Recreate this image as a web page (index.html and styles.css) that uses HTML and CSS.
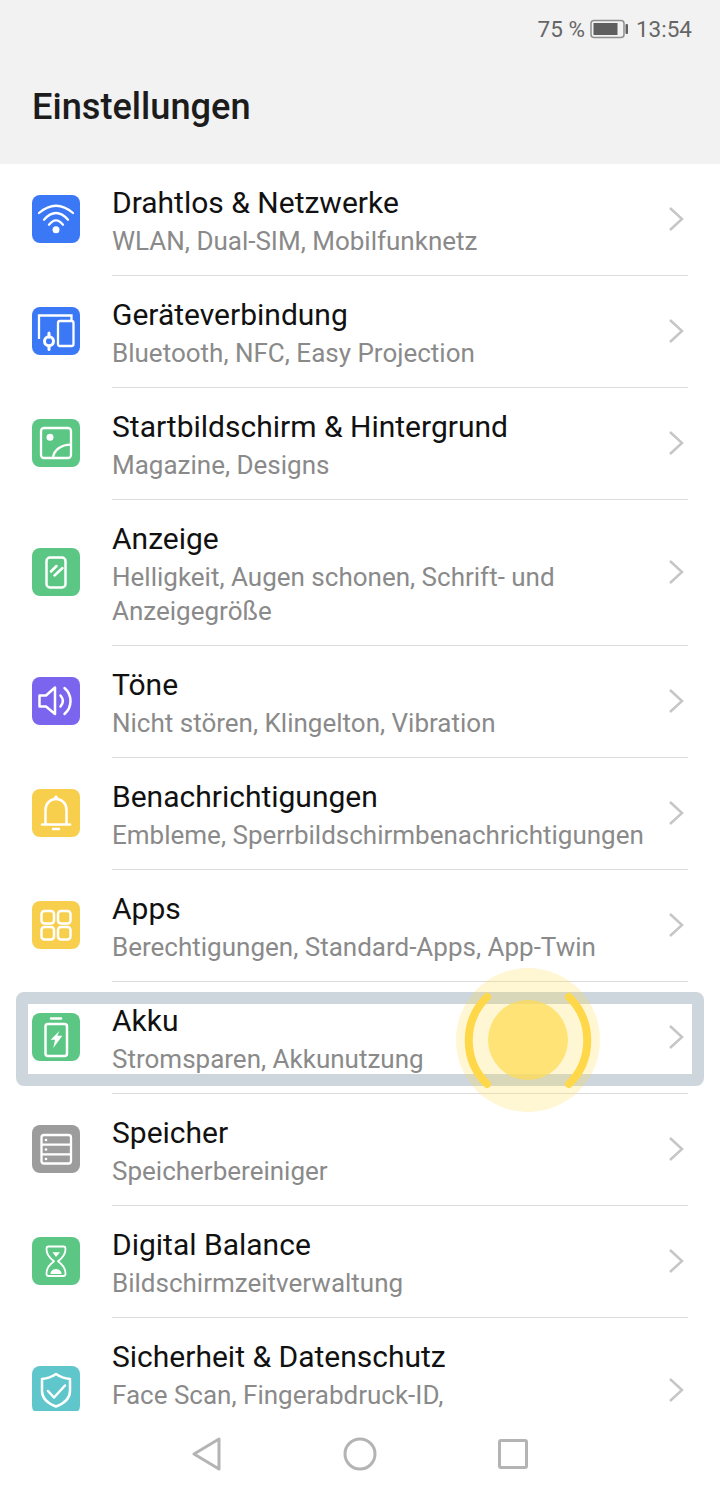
FILE: index.html
```html
<!DOCTYPE html>
<html lang="de">
<head>
<meta charset="utf-8">
<title>Einstellungen</title>
<link rel="stylesheet" href="styles.css">
</head>
<body>
<div class="screen">
  <header class="top">
    <div class="status">
      <span>75 %</span>
      <svg class="batt" width="40" height="20" viewBox="0 0 40 20"><rect x="1" y="1.500" width="33" height="17" rx="3" fill="none" stroke="#8e8e8e" stroke-width="1.500"/><rect x="3.500" y="4" width="24" height="12" fill="#5f5f5f"/><rect x="35.500" y="5" width="2.500" height="10" rx="1" fill="#5f5f5f"/></svg>
      <span>13:54</span>
    </div>
    <h1 class="title">Einstellungen</h1>
  </header>
  <main class="list">
    <a class="row">
      <span class="icon blue"><svg width="48" height="48" viewBox="0 0 48 48" fill="none" stroke="#fff" stroke-width="2.300" stroke-linecap="round"><path d="M7 18Q24 3.400 41 18"/><path d="M12 24.700Q24 11.300 36 24.700"/><path d="M17 29.700Q24 21 31 29.700"/><circle cx="24" cy="34.700" r="3.500" fill="#fff" stroke="none"/></svg></span>
      <span class="text"><span class="name">Drahtlos &amp; Netzwerke</span><span class="sub">WLAN, Dual-SIM, Mobilfunknetz</span></span>
      <svg class="chev" width="16" height="26" viewBox="0 0 16 26"><path d="M2 2l12 11L2 24" fill="none" stroke="#c6c6c6" stroke-width="2.500"/></svg>
    </a>
    <a class="row">
      <span class="icon blue"><svg width="48" height="48" viewBox="0 0 48 48" fill="none" stroke="#fff" stroke-width="2.300"><path d="M7 32V8.500h32.500v5"/><rect x="26" y="14" width="15.500" height="25" rx="2"/><circle cx="17" cy="34.300" r="4.500" stroke-width="3"/><path d="M17 26v4M17 39v3.500" stroke-width="3" stroke-linecap="round"/></svg></span>
      <span class="text"><span class="name">Geräteverbindung</span><span class="sub">Bluetooth, NFC, Easy Projection</span></span>
      <svg class="chev" width="16" height="26" viewBox="0 0 16 26"><path d="M2 2l12 11L2 24" fill="none" stroke="#c6c6c6" stroke-width="2.500"/></svg>
    </a>
    <a class="row">
      <span class="icon green"><svg width="48" height="48" viewBox="0 0 48 48" fill="none" stroke="#fff" stroke-width="2.300"><rect x="9" y="9" width="30" height="30" rx="3"/><circle cx="18" cy="18.300" r="3.500" fill="#fff" stroke="none"/><path d="M21 38.500C22 31 29 25.700 39 25.700"/></svg></span>
      <span class="text"><span class="name">Startbildschirm &amp; Hintergrund</span><span class="sub">Magazine, Designs</span></span>
      <svg class="chev" width="16" height="26" viewBox="0 0 16 26"><path d="M2 2l12 11L2 24" fill="none" stroke="#c6c6c6" stroke-width="2.500"/></svg>
    </a>
    <a class="row">
      <span class="icon green"><svg width="48" height="48" viewBox="0 0 48 48" fill="none" stroke="#fff" stroke-width="2.500"><rect x="14.500" y="9.500" width="19" height="30" rx="3.500"/><path d="M19 23.500l5.500-5.500M22.500 27.500l8-7.500" stroke-linecap="round"/></svg></span>
      <span class="text"><span class="name">Anzeige</span><span class="sub">Helligkeit, Augen schonen, Schrift- und Anzeigegröße</span></span>
      <svg class="chev" width="16" height="26" viewBox="0 0 16 26"><path d="M2 2l12 11L2 24" fill="none" stroke="#c6c6c6" stroke-width="2.500"/></svg>
    </a>
    <a class="row">
      <span class="icon violet"><svg width="48" height="48" viewBox="0 0 48 48" fill="none" stroke="#fff" stroke-width="2.500" stroke-linecap="round" stroke-linejoin="round"><path d="M7.500 18.500v11h6.500l9 7.500V10.500l-9 8z"/><path d="M28.500 18.500c3 3.500 3 7.500 0 11"/><path d="M32.500 11c8 7 8 19 0 26"/></svg></span>
      <span class="text"><span class="name">Töne</span><span class="sub">Nicht stören, Klingelton, Vibration</span></span>
      <svg class="chev" width="16" height="26" viewBox="0 0 16 26"><path d="M2 2l12 11L2 24" fill="none" stroke="#c6c6c6" stroke-width="2.500"/></svg>
    </a>
    <a class="row">
      <span class="icon yellow"><svg width="48" height="48" viewBox="0 0 48 48" fill="none" stroke="#fff" stroke-width="2.500" stroke-linecap="round" stroke-linejoin="round"><path d="M10 35.500h28"/><path d="M13.500 35V21c0-6.500 4.500-11 10.500-11s10.500 4.500 10.500 11v14"/><path d="M21 40h6"/><circle cx="24" cy="8.500" r="2" fill="#fff" stroke="none"/></svg></span>
      <span class="text"><span class="name">Benachrichtigungen</span><span class="sub">Embleme, Sperrbildschirmbenachrichtigungen</span></span>
      <svg class="chev" width="16" height="26" viewBox="0 0 16 26"><path d="M2 2l12 11L2 24" fill="none" stroke="#c6c6c6" stroke-width="2.500"/></svg>
    </a>
    <a class="row">
      <span class="icon yellow"><svg width="48" height="48" viewBox="0 0 48 48" fill="none" stroke="#fff" stroke-width="2.500"><rect x="9.500" y="10" width="12.500" height="12.500" rx="3"/><rect x="26" y="10" width="12.500" height="12.500" rx="3"/><rect x="9.500" y="26" width="12.500" height="12.500" rx="3"/><rect x="26" y="26" width="12.500" height="12.500" rx="3"/></svg></span>
      <span class="text"><span class="name">Apps</span><span class="sub">Berechtigungen, Standard-Apps, App-Twin</span></span>
      <svg class="chev" width="16" height="26" viewBox="0 0 16 26"><path d="M2 2l12 11L2 24" fill="none" stroke="#c6c6c6" stroke-width="2.500"/></svg>
    </a>
    <a class="row">
      <span class="icon green"><svg width="48" height="48" viewBox="0 0 48 48" fill="none" stroke="#fff" stroke-width="2.500"><path d="M19 5.500h10" stroke-linecap="round"/><rect x="13.500" y="11" width="21.500" height="32" rx="2.500"/><path d="M27.300 18L18.700 26.700H23L21.300 35L30.300 22.700H25.300z" fill="#fff" stroke="none"/></svg></span>
      <span class="text"><span class="name">Akku</span><span class="sub">Stromsparen, Akkunutzung</span></span>
      <svg class="chev" width="16" height="26" viewBox="0 0 16 26"><path d="M2 2l12 11L2 24" fill="none" stroke="#c6c6c6" stroke-width="2.500"/></svg>
    </a>
    <a class="row">
      <span class="icon gray"><svg width="48" height="48" viewBox="0 0 48 48" fill="none" stroke="#fff" stroke-width="2.300"><rect x="9.500" y="10" width="29.500" height="28.500" rx="2.500"/><path d="M9.500 19.700h29.500M9.500 29.300h29.500"/><circle cx="14" cy="15" r="1.300" fill="#fff" stroke="none"/><circle cx="14" cy="24.500" r="1.300" fill="#fff" stroke="none"/><circle cx="14" cy="34" r="1.300" fill="#fff" stroke="none"/></svg></span>
      <span class="text"><span class="name">Speicher</span><span class="sub">Speicherbereiniger</span></span>
      <svg class="chev" width="16" height="26" viewBox="0 0 16 26"><path d="M2 2l12 11L2 24" fill="none" stroke="#c6c6c6" stroke-width="2.500"/></svg>
    </a>
    <a class="row">
      <span class="icon green"><svg width="48" height="48" viewBox="0 0 48 48" fill="none" stroke="#fff" stroke-width="1.800" stroke-linejoin="round"><path d="M16.500 9.500h15c2 0 2 1.500 2 2.500c0 5.500-3 9-7.500 12.300c4.500 3.300 7.500 6.800 7.500 12.200c0 1.500-.5 2.500-2 2.500h-15c-1.500 0-2-1-2-2.500c0-5.400 3-8.900 7.500-12.200c-4.500-3.300-7.500-6.800-7.500-12.300c0-1 0-2.500 2-2.500z"/><path d="M20.500 15.300h7.500L24 20z" fill="#fff" stroke="none"/><path d="M18.500 37c0-3 2.500-5 5.500-5s5.500 2 5.500 5z" fill="#fff" stroke="none"/></svg></span>
      <span class="text"><span class="name">Digital Balance</span><span class="sub">Bildschirmzeitverwaltung</span></span>
      <svg class="chev" width="16" height="26" viewBox="0 0 16 26"><path d="M2 2l12 11L2 24" fill="none" stroke="#c6c6c6" stroke-width="2.500"/></svg>
    </a>
    <a class="row tall">
      <span class="icon teal"><svg width="48" height="48" viewBox="0 0 48 48" fill="none" stroke="#fff" stroke-width="2.500" stroke-linecap="round" stroke-linejoin="round"><path d="M24 8c4 2.800 9 4.500 14 5v12c0 7.500-6 12.500-14 15.500c-8-3-14-8-14-15.500V13c5-.5 10-2.200 14-5z"/><path d="M16 25l6 6.500 11-12"/></svg></span>
      <span class="text"><span class="name">Sicherheit &amp; Datenschutz</span><span class="sub">Face Scan, Fingerabdruck-ID,</span></span>
      <svg class="chev" width="16" height="26" viewBox="0 0 16 26"><path d="M2 2l12 11L2 24" fill="none" stroke="#c6c6c6" stroke-width="2.500"/></svg>
    </a>
  </main>
  <nav class="nav">
    <svg width="29" height="34" viewBox="0 0 29 34"><path d="M2 17L27 2v30z" fill="none" stroke="#b4b4b4" stroke-width="3" stroke-linejoin="round"/></svg>
    <svg width="34" height="34" viewBox="0 0 34 34"><circle cx="17" cy="17" r="15" fill="none" stroke="#b4b4b4" stroke-width="3"/></svg>
    <svg class="nav-last" width="30" height="30" viewBox="0 0 30 30"><rect x="1.500" y="1.500" width="27" height="27" rx="1.500" fill="none" stroke="#b4b4b4" stroke-width="3"/></svg>
  </nav>
  <div class="focus"></div>
  <svg class="touch" width="144" height="144" viewBox="0 0 144 144"><circle cx="72" cy="72" r="72" fill="#ffdc50" fill-opacity=".25"/><circle cx="72" cy="72" r="40" fill="#ffdc50" fill-opacity=".7"/><path d="M31 29A61 61 0 0 0 31 116M113 29A61 61 0 0 1 113 116" fill="none" stroke="#ffd84a" stroke-width="8" stroke-linecap="round"/></svg>
</div>
</body>
</html>
```
FILE: styles.css
```css
* { box-sizing: border-box; }
html, body { margin: 0; padding: 0; background: #fff; }
.screen {
  position: relative;
  width: 720px;
  height: 1496px;
  overflow: hidden;
  display: flex;
  flex-direction: column;
  font-family: Roboto, "Noto Sans", sans-serif;
}
.top {
  height: 164px;
  flex: none;
  background: #f2f2f2;
  display: flex;
  flex-direction: column;
}
.status {
  display: flex;
  justify-content: flex-end;
  align-items: center;
  gap: 6px;
  height: 58px;
  padding-right: 28px;
  font-size: 22.5px;
  color: #666;
}
.batt { display: block; margin-left: -1px; }
.title {
  margin: 0;
  padding: 27px 0 0 32px;
  font-size: 36.200px;
  line-height: 44px;
  font-weight: 500;
  color: #1c1c1c;
}
.list {
  flex: none;
  height: 1247px;
  overflow: hidden;
  background: #fff;
}
.row {
  display: flex;
  align-items: center;
  position: relative;
}
.icon {
  flex: none;
  width: 48px;
  height: 48px;
  margin: 0 32px 2px;
  border-radius: 8px;
  display: block;
}
.icon svg { display: block; }
.blue { background: #3a78f5; }
.green { background: #5cc784; }
.violet { background: #7c65ee; }
.yellow { background: #f7cf4c; }
.gray { background: #9c9c9c; }
.teal { background: #5fc7cb; }
.text {
  flex: 1;
  min-width: 0;
  display: flex;
  flex-direction: column;
  gap: 4px;
  padding: 22px 44px 17px 0;
  border-bottom: 1px solid #dcdcdc;
  margin-right: 32px;
}
.tall .text { padding-bottom: 51px; }
.name {
  font-size: 30px;
  line-height: 34px;
  color: #111;
}
.sub {
  font-size: 26px;
  line-height: 34px;
  color: #8a8a8a;
}
.chev {
  position: absolute;
  right: 36px;
  top: 50%;
  margin-top: -14px;
}
.nav {
  flex: 1;
  display: flex;
  justify-content: center;
  align-items: center;
  gap: 122px;
  background: #fff;
}
.nav-last { margin-left: -1px; }
.focus {
  position: absolute;
  left: 16px;
  top: 992px;
  width: 688px;
  height: 94px;
  border: 12px solid #cdd6dc;
  border-radius: 8px;
}
.touch {
  position: absolute;
  left: 456px;
  top: 968px;
}
```
